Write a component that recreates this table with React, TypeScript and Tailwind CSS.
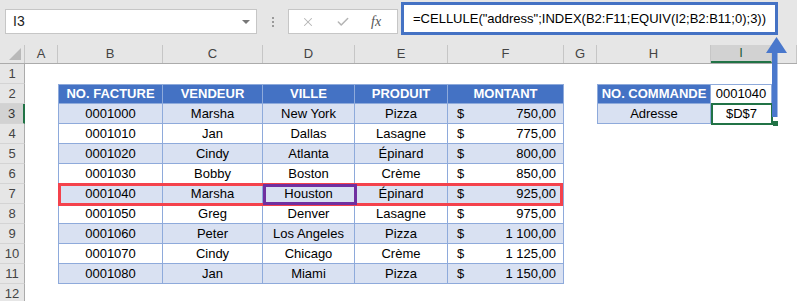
import { Check, X } from "lucide-react";
import type { ReactNode } from "react";

// column widths: row header, A..J
const COLS = [
  "w-[25px]",
  "w-[33px]",
  "w-[105px]",
  "w-[100px]",
  "w-[92px]",
  "w-[93px]",
  "w-[116px]",
  "w-[33px]",
  "w-[114px]",
  "w-[61px]",
  "w-[25px]",
];
const LETTERS = ["A", "B", "C", "D", "E", "F", "G", "H", "I", "J"];

const data = [
  ["0001000", "Marsha", "New York", "Pizza", "750,00"],
  ["0001010", "Jan", "Dallas", "Lasagne", "775,00"],
  ["0001020", "Cindy", "Atlanta", "Épinard", "800,00"],
  ["0001030", "Bobby", "Boston", "Crème", "850,00"],
  ["0001040", "Marsha", "Houston", "Épinard", "925,00"],
  ["0001050", "Greg", "Denver", "Lasagne", "975,00"],
  ["0001060", "Peter", "Los Angeles", "Pizza", "1 100,00"],
  ["0001070", "Cindy", "Chicago", "Crème", "1 125,00"],
  ["0001080", "Jan", "Miami", "Pizza", "1 150,00"],
];

type CellSpec = { content?: ReactNode; cls?: string };

const BORDER = "border-[#8eaadb]";

const SheetRow = ({
  n,
  cells,
  active,
}: {
  n: number;
  cells: Record<number, CellSpec>;
  active?: boolean;
}) => (
  <div className="flex h-[20px]">
    <div
      className={`${COLS[0]} shrink-0 flex items-center justify-center border-b border-b-[#d4d4d4] text-[13px] ${
        active
          ? "bg-[#d2d2d2] border-r-2 border-r-[#217346] text-[#333]"
          : "bg-[#e6e6e6] border-r border-r-[#ababab] text-[#444]"
      }`}
    >
      {n}
    </div>
    {LETTERS.map((_, i) => (
      <div
        key={i}
        className={`${COLS[i + 1]} shrink-0 flex items-center whitespace-nowrap overflow-hidden ${
          cells[i + 1]?.cls ?? ""
        }`}
      >
        {cells[i + 1]?.content}
      </div>
    ))}
  </div>
);

export default function App() {
  const headers = ["NO. FACTURE", "VENDEUR", "VILLE", "PRODUIT", "MONTANT"];

  const headerRow: Record<number, CellSpec> = {};
  headers.forEach((h, i) => {
    headerRow[i + 2] = {
      content: h,
      cls: `justify-center font-bold text-white bg-[#4472c4] border-t border-r border-b ${BORDER} ${
        i === 0 ? "border-l" : ""
      }`,
    };
  });
  headerRow[8] = {
    content: "NO. COMMANDE",
    cls: `justify-center font-bold text-white bg-[#4472c4] border ${BORDER}`,
  };
  headerRow[9] = {
    content: "0001040",
    cls: `justify-center bg-white border-t border-r border-b ${BORDER}`,
  };

  return (
    <div className="relative w-[797px] h-[301px] overflow-hidden bg-white font-['Liberation_Sans',Arial,sans-serif] text-[13px] text-black">
      {/* formula bar */}
      <div className="flex items-start h-[45px] bg-[#e6e6e6]">
        <div className="ml-[5px] mt-[9px] w-[252px] h-[25px] bg-white border border-[#c6c6c6] flex items-center justify-between pl-[7px] pr-[6px]">
          <span className="text-[14px] text-[#222]">I3</span>
          <span className="w-0 h-0 border-x-4 border-x-transparent border-t-4 border-t-[#777]" />
        </div>
        <div className="w-[31px] mt-[17px] flex flex-col items-center gap-[2px]">
          <span className="w-[2px] h-[2px] bg-[#9a9a9a]" />
          <span className="w-[2px] h-[2px] bg-[#9a9a9a]" />
          <span className="w-[2px] h-[2px] bg-[#9a9a9a]" />
        </div>
        <div className="mt-[9px] w-[110px] h-[25px] bg-white border border-[#c6c6c6] flex items-center pl-[12px] gap-[21px]">
          <X size={14} strokeWidth={1.8} className="text-[#b4b4b4]" />
          <Check size={14} strokeWidth={2.6} className="text-[#b4b4b4]" />
          <span className="italic font-['Liberation_Serif',serif] text-[14px] text-[#555] w-[14px]">
            fx
          </span>
        </div>
        <div className="ml-[3px] mt-[2px] w-[377px] h-[33px] border-[3px] border-[#4472c4] bg-white flex items-center pl-[9px] text-[13px]">
          =CELLULE("address";INDEX(B2:F11;EQUIV(I2;B2:B11;0);3))
        </div>
      </div>

      {/* column headers */}
      <div className="flex h-[19px] bg-[#e6e6e6] border-b border-[#ababab]">
        <div className={`${COLS[0]} shrink-0 relative border-r border-[#c6c6c6]`}>
          <span className="absolute right-[3px] bottom-[3px] w-0 h-0 border-l-[12px] border-l-transparent border-b-[12px] border-b-[#b9b9b9]" />
        </div>
        {LETTERS.map((l, i) => (
          <div
            key={l}
            className={`${COLS[i + 1]} shrink-0 flex items-center justify-center border-r border-[#c6c6c6] text-[13px] ${
              l === "I"
                ? "bg-[#d2d2d2] border-b-2 border-b-[#217346] text-[#1e5c38]"
                : "text-[#444]"
            }`}
          >
            {l === "J" ? "" : l}
          </div>
        ))}
      </div>

      {/* rows */}
      <SheetRow n={1} cells={{}} />
      <SheetRow n={2} cells={headerRow} />
      {data.map((r, idx) => {
        const n = idx + 3;
        const bg = idx % 2 === 0 ? "bg-[#d9e1f2]" : "bg-white";
        const base = `border-r border-b ${BORDER} ${bg}`;
        const cells: Record<number, CellSpec> = {
          2: { content: r[0], cls: `justify-center border-l ${base}` },
          3: { content: r[1], cls: `justify-center ${base}` },
          4: { content: r[2], cls: `justify-center ${base}` },
          5: { content: r[3], cls: `justify-center ${base}` },
          6: {
            content: (
              <>
                <span>$</span>
                <span>{r[4]}</span>
              </>
            ),
            cls: `justify-between pl-[9px] pr-[7px] ${base}`,
          },
        };
        if (n === 3) {
          cells[8] = {
            content: "Adresse",
            cls: `justify-center bg-[#d9e1f2] border-l border-r border-b ${BORDER}`,
          };
          cells[9] = { content: "$D$7", cls: "justify-center" };
        }
        return <SheetRow key={n} n={n} cells={cells} active={n === 3} />;
      })}
      <SheetRow n={12} cells={{}} />

      {/* overlays */}
      <div className="absolute left-[58px] top-[183px] w-[505px] h-[23px] border-[3px] border-[#f4424c]" />
      <div className="absolute left-[263px] top-[184px] w-[94px] h-[21px] border-[3px] border-[#7030a0]" />
      <div className="absolute left-[711px] top-[103px] w-[62px] h-[22px] border-2 border-[#217346]" />
      <div className="absolute left-[773px] top-[121px] w-[5px] h-[5px] bg-[#217346]" />
      <svg
        className="absolute left-[764px] top-[35px]"
        width="25"
        height="84"
        viewBox="0 0 25 84"
      >
        <polygon points="2,18 23,18 12.5,2" fill="#4a78cc" />
        <rect x="8" y="17" width="5.5" height="65" fill="#4a78cc" />
      </svg>
    </div>
  );
}
